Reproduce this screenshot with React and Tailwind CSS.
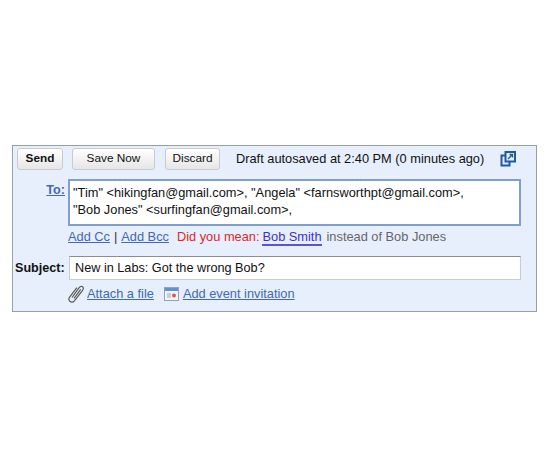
const btn = 'h-[22px] rounded-[3px] border border-[#c9cbce] bg-gradient-to-b from-white to-[#e6e6e6] text-[11.8px] text-[#111] flex items-center justify-center'
const link = 'text-[#4169b5] underline'

function PopoutIcon() {
  return (
    <svg width="18" height="18" viewBox="0 0 18 18" fill="none">
      <path d="M6 5.5H2.5V15.5H10.5V12" stroke="#1f5a9c" strokeWidth="2" />
      <rect x="6.5" y="2" width="9.5" height="9.5" fill="#e6effb" stroke="#1f5a9c" strokeWidth="2" />
      <path d="M9 9L13 5M10.5 4.5H13.5V7.5" stroke="#1f5a9c" strokeWidth="1.4" />
    </svg>
  )
}

function ClipIcon() {
  return (
    <svg width="16" height="18" viewBox="0 0 16 18" fill="none" stroke="#5a5a5a" strokeWidth="1.2">
      <path d="M4 12.5L11 2.8C12 1.4 13.6 1 14.6 1.8C15.6 2.7 15.4 4.2 14.4 5.6L6.4 15.8C5.2 17.2 3.2 17.4 1.9 16.3C0.7 15.2 0.7 13.5 1.6 12.2L8.9 2.6M6 13.3L12.7 4.4" />
    </svg>
  )
}

function CalendarIcon() {
  return (
    <svg width="15" height="15" viewBox="0 0 15 15">
      <rect x="0.5" y="1.5" width="14" height="13" fill="#f3f4f6" stroke="#8fa3bd" />
      <rect x="1" y="2" width="13" height="3" fill="#5f93cf" />
      <rect x="3" y="7" width="4" height="5" fill="#c9ced6" />
      <circle cx="10" cy="9.5" r="2" fill="#e2574c" />
    </svg>
  )
}

export default function App() {
  return (
    <div className="h-[458px] w-[550px] bg-white pt-[145px] pl-[12px] font-['Liberation_Sans',Arial,sans-serif]">
      <div className="h-[167px] w-[525px] border border-[#9a9ea6] bg-[#e6effb]">
        <div className="flex items-center pt-[2px] pl-[4px]">
          <button className={`${btn} w-[46px] font-bold`}>Send</button>
          <button className={`${btn} ml-[9px] w-[83px]`}>Save Now</button>
          <button className={`${btn} ml-[10px] w-[55px]`}>Discard</button>
          <span className="ml-[16px] w-[263px] text-[12.8px] whitespace-nowrap text-[#111]">Draft autosaved at 2:40 PM (0 minutes ago)</span>
          <PopoutIcon />
        </div>

        <div className="mt-[9px] flex">
          <a className="mt-[4px] w-[52px] text-right text-[12.6px] leading-[15px] font-bold text-[#4169b5] underline">To:</a>
          <div className="ml-[3px] h-[47px] w-[453px] border-2 border-[#7f9fcf] bg-white px-[3px] pt-[3px] text-[12.8px] leading-[17px] whitespace-nowrap text-[#111]">
            <div>"Tim" &lt;hikingfan@gmail.com&gt;, "Angela" &lt;farnsworthpt@gmail.com&gt;,</div>
            <div>"Bob Jones" &lt;surfingfan@gmail.com&gt;,</div>
          </div>
        </div>

        <div className="mt-[3px] ml-[55px] flex h-[16px] items-center text-[12.8px] whitespace-nowrap text-[#333]">
          <a className={link}>Add Cc</a>
          <span className="mx-[4px]">|</span>
          <a className={link}>Add Bcc</a>
          <span className="ml-[8px] text-[#e0262b]">Did you mean:</span>
          <a className="ml-[3px] border-b-2 border-[#5a55cf] leading-[15px] text-[#3a2fd0]">Bob Smith</a>
          <span className="ml-[5px] text-[#666]">instead of Bob Jones</span>
        </div>

        <div className="mt-[11px] flex items-center">
          <span className="ml-[2px] w-[50px] pt-[1px] text-[12.6px] font-bold whitespace-nowrap text-[#111]">Subject:</span>
          <div className="ml-[4px] flex h-[24px] w-[452px] items-center border border-[#c9ccd1] border-t-[#8a8d92] bg-white px-[5px] pt-[1px] text-[12.7px] text-[#111]">
            New in Labs: Got the wrong Bob?
          </div>
        </div>

        <div className="mt-[4px] ml-[55px] flex items-center text-[12.8px] whitespace-nowrap">
          <ClipIcon />
          <a className={`${link} ml-[3px]`}>Attach a file</a>
          <span className="ml-[10px]"><CalendarIcon /></span>
          <a className={`${link} ml-[4px]`}>Add event invitation</a>
        </div>
      </div>
    </div>
  )
}
